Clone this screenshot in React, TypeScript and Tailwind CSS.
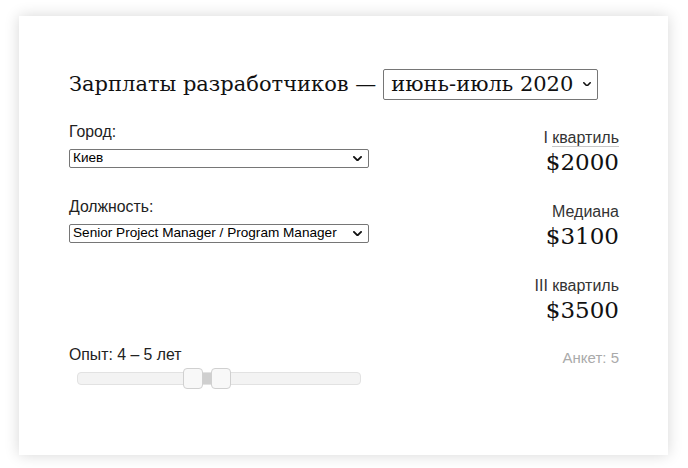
import React from "react";

const serif = "font-['Georgia','DejaVu_Serif',serif]";
const sans = "font-['Liberation_Sans',Arial,sans-serif]";

function Chevron({ size = 9 }: { size?: number }) {
    return (
        <svg width={size} height={size * 0.6} viewBox="0 0 10 6" fill="none">
            <path d="M1 1l4 4 4-4" stroke="#111" strokeWidth="2" strokeLinecap="round" strokeLinejoin="round" />
        </svg>
    );
}

function FakeSelect({ value, className, chevron = 9 }: { value: string; className: string; chevron?: number }) {
    return (
        <div className={`flex items-center justify-between border border-[#767676] rounded-[2px] bg-white ${className}`}>
            <span className="whitespace-nowrap">{value}</span>
            <Chevron size={chevron} />
        </div>
    );
}

export default function App() {
    const stats = [
        { label: "I квартиль", value: "$2000", underline: true },
        { label: "Медиана", value: "$3100", underline: false },
        { label: "III квартиль", value: "$3500", underline: false },
    ];

    return (
        <div className="w-[688px] h-[468px] bg-white pt-[16px] pl-[19px]">
            <div className={`w-[649px] h-[439px] bg-white shadow-[0_0_14px_rgba(0,0,0,0.16)] pt-[53px] pl-[50px] pr-[49px] ${sans}`}>
                {/* Title */}
                <div className="flex items-center h-[30px]">
                    <h1 className={`${serif} text-[21px] leading-[30px] text-[#111] mr-[7px] whitespace-nowrap`}>
                        Зарплаты разработчиков —
                    </h1>
                    <FakeSelect
                        value="июнь-июль 2020"
                        chevron={8}
                        className={`${serif} oldstyle-nums text-[21px] leading-[28px] h-[31px] w-[215px] pl-[7px] pr-[6px] text-[#111]`}
                    />
                </div>

                <div className="flex justify-between">
                    {/* Filters */}
                    <div className="w-[300px] text-[15.8px] text-[#222]">
                        <div className="mt-[24px] leading-[18px]">Город:</div>
                        <FakeSelect value="Киев" className="mt-[8px] h-[19px] text-[13.6px] pl-[3px] pr-[6px] text-black" />

                        <div className="mt-[30px] leading-[18px]">Должность:</div>
                        <FakeSelect
                            value="Senior Project Manager / Program Manager"
                            className="mt-[8px] h-[19px] text-[13.6px] pl-[3px] pr-[6px] text-black"
                        />

                        <div className="mt-[103px] leading-[18px]">Опыт: 4 – 5 лет</div>
                        {/* range slider */}
                        <div className="relative ml-[8px] mt-[8px] w-[284px] h-[13px] rounded-[4px] bg-[#f3f3f3] border border-[#e2e2e2]">
                            <div className="absolute top-0 bottom-0 left-[124px] w-[10px] bg-[#cfcfcf]" />
                            <div className="absolute top-[-5px] left-[105px] w-[20px] h-[21px] rounded-[4px] bg-[#f8f8f8] border border-[#d0d0d0]" />
                            <div className="absolute top-[-5px] left-[133px] w-[20px] h-[21px] rounded-[4px] bg-[#f8f8f8] border border-[#d0d0d0]" />
                        </div>
                    </div>

                    {/* Stats */}
                    <div className="flex flex-col items-end text-right">
                        {stats.map((s, i) => (
                            <div key={s.label} className={`flex flex-col items-end ${i === 0 ? "mt-[30px]" : "mt-[26px]"}`}>
                                <div className="text-[16px] leading-[18px] text-[#333]">
                                    {s.underline ? (
                                        <>
                                            I{" "}
                                            <span className="border-b border-[#c8c8c8]">квартиль</span>
                                        </>
                                    ) : (
                                        s.label
                                    )}
                                </div>
                                <div className={`${serif} oldstyle-nums text-[23px] leading-[30px] text-[#111]`}>{s.value}</div>
                            </div>
                        ))}
                        <div className="mt-[24px] text-[15px] leading-[18px] text-[#aaa]">Анкет: 5</div>
                    </div>
                </div>
            </div>
        </div>
    );
}
